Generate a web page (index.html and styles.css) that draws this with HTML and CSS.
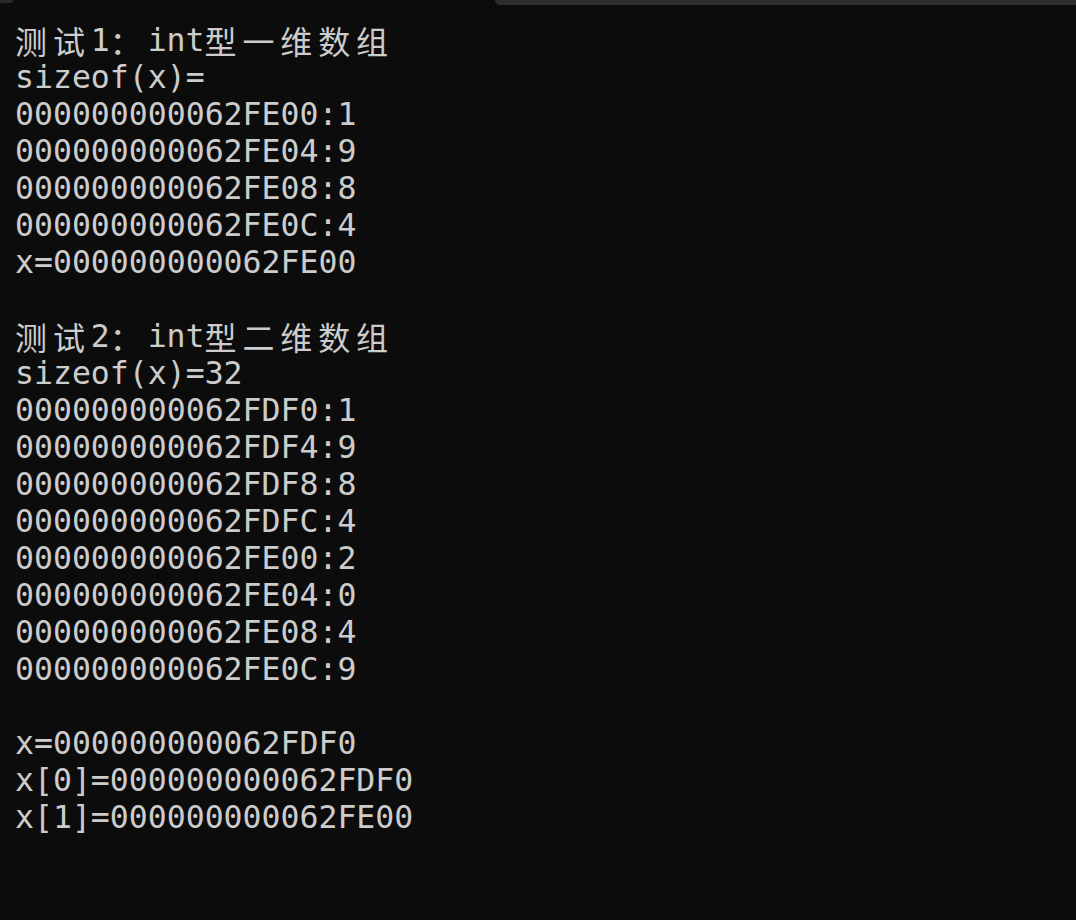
FILE: index.html
```html
<!DOCTYPE html>
<html>
<head>
<meta charset="utf-8">
<link rel="stylesheet" href="styles.css">
</head>
<body>
<div class="tabs"><div class="tab-left"></div><div class="tab-right"></div></div>
<div class="console">
<div class="line"><span class="w">测</span><span class="w">试</span>1<span class="w">：</span>int<span class="w">型</span><span class="w">一</span><span class="w">维</span><span class="w">数</span><span class="w">组</span></div>
<div class="line">sizeof(x)=</div>
<div class="line">000000000062FE00:1</div>
<div class="line">000000000062FE04:9</div>
<div class="line">000000000062FE08:8</div>
<div class="line">000000000062FE0C:4</div>
<div class="line">x=000000000062FE00</div>
<div class="line"></div>
<div class="line"><span class="w">测</span><span class="w">试</span>2<span class="w">：</span>int<span class="w">型</span><span class="w">二</span><span class="w">维</span><span class="w">数</span><span class="w">组</span></div>
<div class="line">sizeof(x)=32</div>
<div class="line">000000000062FDF0:1</div>
<div class="line">000000000062FDF4:9</div>
<div class="line">000000000062FDF8:8</div>
<div class="line">000000000062FDFC:4</div>
<div class="line">000000000062FE00:2</div>
<div class="line">000000000062FE04:0</div>
<div class="line">000000000062FE08:4</div>
<div class="line">000000000062FE0C:9</div>
<div class="line"></div>
<div class="line">x=000000000062FDF0</div>
<div class="line">x[0]=000000000062FDF0</div>
<div class="line">x[1]=000000000062FE00</div>
</div>
</body>
</html>
```
FILE: styles.css
```css
html, body {
  margin: 0;
  padding: 0;
  background: #0c0c0c;
  height: 100%;
  overflow: hidden;
}
.tabs {
  display: flex;
  justify-content: space-between;
  align-items: flex-start;
  height: 5px;
}
.tab-left {
  width: 13px;
  height: 3px;
  background: #2a2a2a;
  border-bottom-right-radius: 3px;
}
.tab-right {
  width: 581px;
  height: 5px;
  background: #2e2e2e;
  border-bottom-left-radius: 5px;
}
.console {
  padding: 17px 0 0 15px;
  font-family: "DejaVu Sans Mono", "Noto Sans CJK SC", monospace;
  font-size: 31.5px;
  line-height: 37px;
  color: #cccccc;
}
.line {
  height: 37px;
  white-space: pre;
}
.w {
  display: inline-block;
  width: 37.9px;
  text-align: left;
  font-family: "Noto Sans CJK SC", sans-serif;
  font-size: 32px;
  line-height: 37px;
  vertical-align: top;
}
```
